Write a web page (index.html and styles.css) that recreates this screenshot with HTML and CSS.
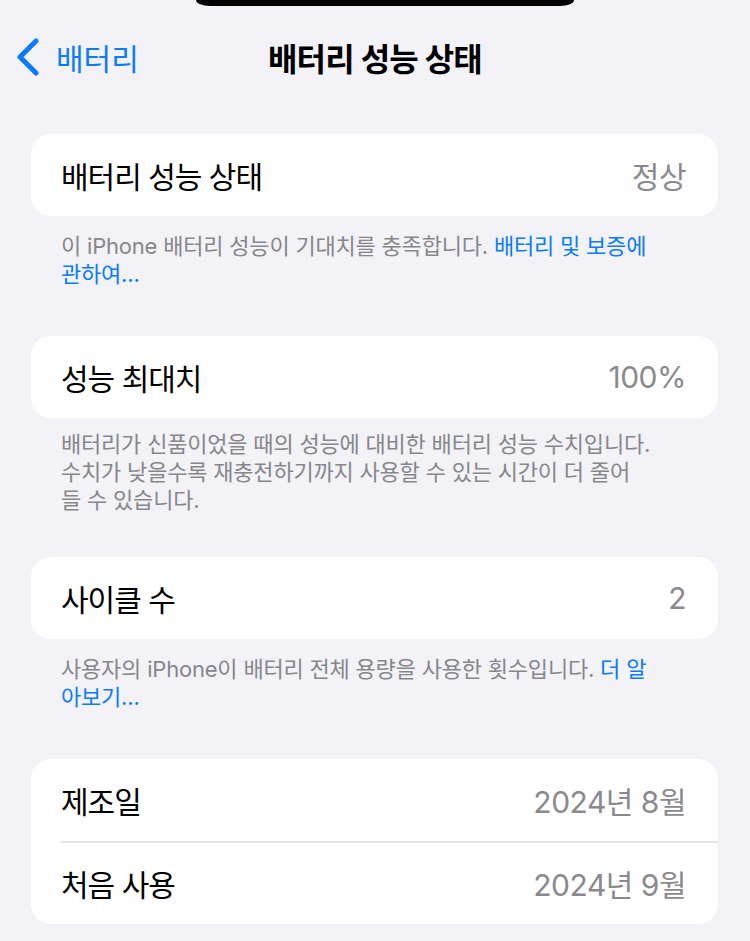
FILE: index.html
```html
<!DOCTYPE html>
<html lang="ko">
<head>
<meta charset="utf-8">
<title>배터리 성능 상태</title>
<link rel="stylesheet" href="styles.css">
</head>
<body>
<div class="island"></div>
<header class="nav">
  <a class="back" href="#">
    <svg class="chev" width="24" height="38" viewBox="0 0 24 38"><path d="M20 3 L4 19 L20 35" fill="none" stroke="#0a7aff" stroke-width="5" stroke-linecap="round" stroke-linejoin="round"/></svg>
    <span>배터리</span>
  </a>
  <h1 class="title">배터리 성능 상태</h1>
  <div></div>
</header>
<main class="list">
  <section class="group">
    <div class="card">
      <div class="row"><span class="label">배터리 성능 상태</span><span class="value">정상</span></div>
    </div>
    <p class="footer">이 iPhone 배터리 성능이 기대치를 충족합니다. <a href="#">배터리 및 보증에<br>관하여...</a></p>
  </section>
  <section class="group">
    <div class="card">
      <div class="row"><span class="label">성능 최대치</span><span class="value">100%</span></div>
    </div>
    <p class="footer tight">배터리가 신품이었을 때의 성능에 대비한 배터리 성능 수치입니다.<br>수치가 낮을수록 재충전하기까지 사용할 수 있는 시간이 더 줄어<br>들 수 있습니다.</p>
  </section>
  <section class="group">
    <div class="card">
      <div class="row"><span class="label">사이클 수</span><span class="value">2</span></div>
    </div>
    <p class="footer">사용자의 iPhone이 배터리 전체 용량을 사용한 횟수입니다. <a href="#">더 알<br>아보기...</a></p>
  </section>
  <section class="group">
    <div class="card">
      <div class="row"><span class="label">제조일</span><span class="value">2024년 8월</span></div>
      <div class="row sep"><span class="label">처음 사용</span><span class="value">2024년 9월</span></div>
    </div>
  </section>
</main>
</body>
</html>
```

FILE: styles.css
```css
* { box-sizing: border-box; }
html, body {
  margin: 0;
  padding: 0;
  background: #f2f2f7;
  font-family: "Inter", "Noto Sans CJK KR", sans-serif;
  color: #000;
}
body { width: 750px; height: 941px; overflow: hidden; }
a { text-decoration: none; color: #0a7aff; }

.island {
  width: 378px;
  height: 6px;
  margin-left: 196px;
  background: #000;
  border-radius: 0 0 14px 14px / 0 0 6px 6px;
}

.nav {
  margin-top: 6px;
  height: 90px;
  display: grid;
  grid-template-columns: 1fr auto 1fr;
  align-items: center;
}
.back {
  display: flex;
  align-items: center;
  gap: 16px;
  padding-left: 16px;
  font-size: 30px;
  color: #0a7aff;
}
.chev { display: block; }
.title {
  margin: 0;
  font-size: 32px;
  font-weight: 700;
  letter-spacing: -0.8px;
}

.list { padding: 32px 32px 0 31px; }

.card {
  background: #fff;
  border-radius: 20px;
  overflow: hidden;
}
.row {
  height: 83px;
  display: flex;
  align-items: center;
  justify-content: space-between;
  padding: 0 32px 0 30px;
  font-size: 30px;
  position: relative;
}
.label { letter-spacing: -1px; }
.row.sep::before {
  content: "";
  position: absolute;
  top: 0;
  left: 30px;
  right: 0;
  height: 2px;
  background: #e3e3e8;
}
.row:first-child { height: 82px; }
.value { color: #8a8a8e; letter-spacing: -0.5px; }

.footer {
  margin: 0;
  padding: 16px 30px 48px 30px;
  font-size: 22px;
  line-height: 28px;
  color: #86868b;
  letter-spacing: -0.2px;
  white-space: nowrap;
}
.footer.tight { padding-top: 12px; padding-bottom: 43px; }
```
